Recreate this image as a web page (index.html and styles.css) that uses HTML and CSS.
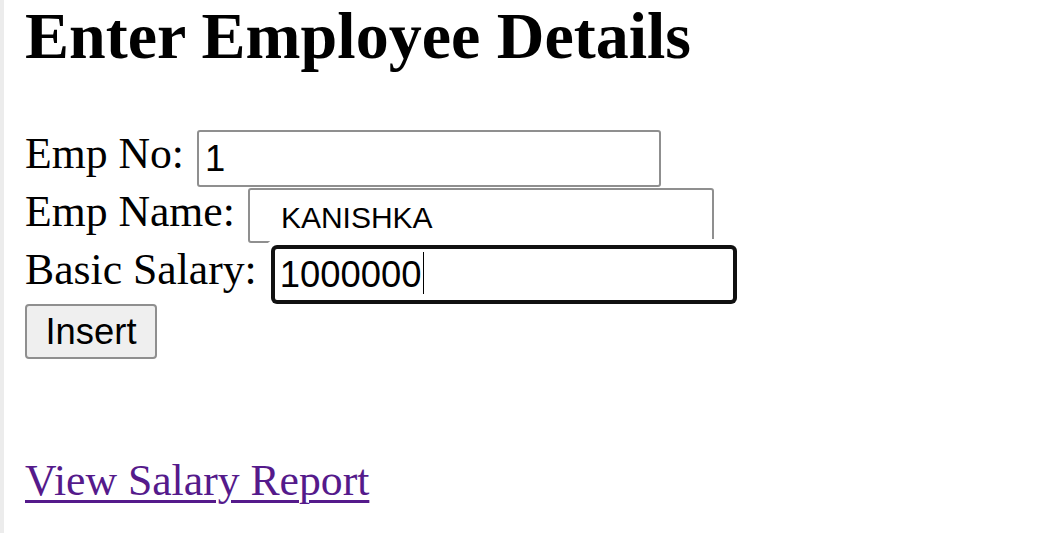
FILE: index.html
```html
<!DOCTYPE html>
<html lang="en">
<head>
<meta charset="utf-8">
<title>Enter Employee Details</title>
<link rel="stylesheet" href="styles.css">
</head>
<body>
<div class="page">
  <h2 class="title">Enter Employee Details</h2>
  <form class="emp-form">
    <div class="row">
      <label class="label" for="empno">Emp No:</label>
      <input class="field" id="empno" type="text" value="1">
    </div>
    <div class="row">
      <label class="label" for="empname">Emp Name:</label>
      <input class="field field-name" id="empname" type="text" value="KANISHKA">
    </div>
    <div class="row">
      <label class="label" for="salary">Basic Salary:</label>
      <span class="focus-wrap">
        <input class="field field-focus" id="salary" type="text" value="1000000">
        <span class="caret"></span>
      </span>
    </div>
    <div class="actions">
      <button class="btn" type="button">Insert</button>
    </div>
  </form>
  <p class="report"><a class="report-link" href="#">View Salary Report</a></p>
</div>
</body>
</html>
```

FILE: styles.css
```css
html, body {
  margin: 0;
  padding: 0;
  background: #ffffff;
}

.page {
  box-sizing: border-box;
  min-height: 100vh;
  border-left: 4px solid #ececec;
  padding-left: 21px;
  font-family: "Liberation Serif", "Times New Roman", serif;
  color: #000000;
}

.title {
  margin: 0 0 59px 0;
  font-size: 66px;
  line-height: 71px;
  font-weight: bold;
}

.emp-form {
  display: flex;
  flex-direction: column;
  margin: 0;
}

.row {
  display: flex;
  align-items: flex-start;
  gap: 13px;
  height: 58px;
}

.label {
  font-size: 43.7px;
  line-height: 44px;
  margin-top: 1px;
  white-space: nowrap;
}

.field {
  box-sizing: border-box;
  width: 464px;
  height: 57px;
  margin: 0;
  padding: 0 6px;
  border: 2px solid #8f8f8f;
  border-radius: 3px;
  background: #ffffff;
  color: #000000;
  font-family: "Liberation Sans", Arial, sans-serif;
  font-size: 36.4px;
  outline: none;
}

.field-name {
  width: 466px;
  height: 55px;
  padding: 4px 4px 0 31px;
  font-size: 30px;
  margin-top: 0;
}

.focus-wrap {
  position: relative;
  display: block;
  margin-left: 2px;
}

.field-focus {
  padding: 0 5px;
  border: 3px solid #111111;
  border-radius: 5px;
  box-shadow: 0 0 0 1px #111111, 0 0 0 7px #ffffff;
}

.caret {
  position: absolute;
  left: 151px;
  top: 6px;
  width: 1px;
  height: 42px;
  background: #000000;
}

.actions {
  display: flex;
}

.btn {
  box-sizing: border-box;
  height: 55px;
  width: 132px;
  margin: 0;
  padding: 0 18px;
  border: 2px solid #8f8f8f;
  border-radius: 4px;
  background: #efefef;
  color: #000000;
  font-family: "Liberation Sans", Arial, sans-serif;
  font-size: 36.4px;
}

.report {
  margin: 96px 0 0 0;
  font-size: 43.7px;
  line-height: 50px;
}

.report-link {
  color: #551a8b;
  text-decoration: underline;
  text-decoration-thickness: 3px;
  text-underline-offset: 5px;
}
```
